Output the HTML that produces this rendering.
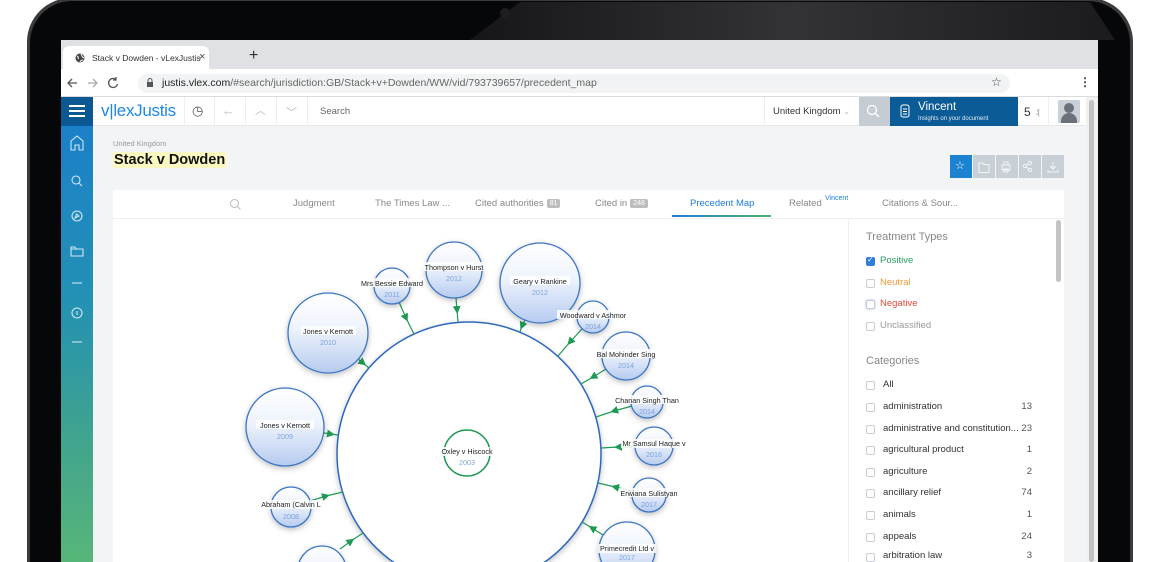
<!DOCTYPE html>
<html><head><meta charset="utf-8"><style>
*{margin:0;padding:0;box-sizing:border-box}
html,body{width:1154px;height:562px;overflow:hidden}
body{background:#fff;font-family:"Liberation Sans",Arial,sans-serif;position:relative}
.a{position:absolute}
.t{position:absolute;white-space:nowrap}
.cb{position:absolute;left:866px;width:9px;height:9px;border:1px solid #c9ccd1;border-radius:2px;background:#fff}
.cat{position:absolute;left:883px;font-size:9.5px;line-height:11px;color:#333}
.cnt{position:absolute;right:122px;font-size:9.5px;line-height:11px;color:#555}
.tab{position:absolute;top:198px;font-size:9.5px;color:#888}
.badge{display:inline-block;background:#bdbdbd;color:#fff;font-size:7px;padding:1px 3px;border-radius:2px;margin-left:3px;vertical-align:1px}
.ab{position:absolute;top:155px;width:22px;height:23px;background:#c9cfd7}
</style></head><body>
<!-- laptop bezel -->
<div class="a" style="left:27px;top:-2px;width:1106px;height:564px;background:#3b3b3d;border-radius:44px 44px 0 0"></div>
<div class="a" style="left:30px;top:1px;width:1100px;height:561px;background:#060709;border-radius:42px 42px 0 0"></div>
<svg class="a" style="left:0;top:0" width="1154" height="40"><defs><linearGradient id="rg" x1="0" x2="1" y1="0" y2="0"><stop offset="0" stop-color="#1a1a1c"/><stop offset="0.5" stop-color="#3e3e40"/><stop offset="1" stop-color="#202022"/></linearGradient></defs><polygon points="520,2 1090,2 1115,40 470,40" fill="url(#rg)" opacity="0.8"/><circle cx="505" cy="13" r="5" fill="#1e1e20"/></svg>
<!-- screen -->
<div class="a" style="left:61px;top:40px;width:1037px;height:522px;background:#f3f4f6"></div>
<!-- tab strip -->
<div class="a" style="left:61px;top:40px;width:1037px;height:29px;background:#dfe1e5"></div>
<div class="a" style="left:63px;top:46px;width:146px;height:23px;background:#fff;border-radius:6px 6px 0 0"></div>
<svg class="a" style="left:75px;top:53px" width="10" height="10"><circle cx="5" cy="5" r="4.5" fill="#444"/><path d="M2 3 Q4 4 3 6 M6 1 Q7 4 9 5 M5 9 Q6 7 8 7" stroke="#fff" stroke-width="1" fill="none"/></svg>
<div class="t" style="left:92px;top:53px;font-size:8.5px;color:#333">Stack v Dowden - vLexJustis</div>
<div class="t" style="left:199px;top:51px;font-size:11px;color:#444">×</div>
<div class="t" style="left:249px;top:47px;font-size:16px;color:#333">+</div>
<!-- address bar -->
<div class="a" style="left:61px;top:69px;width:1037px;height:28px;background:#fff;border-bottom:1px solid #dadce0"></div>
<svg class="a" style="left:66px;top:76px" width="60" height="14" stroke="#555" stroke-width="1.3" fill="none"><path d="M11 7H2M6 3L2 7l4 4"/><path d="M22 7h9M27 3l4 4-4 4" stroke="#aaa"/><path d="M50 3.5A4.5 4.5 0 1 0 51.5 8M50 1v3h-3"/></svg>
<div class="a" style="left:138px;top:74px;width:872px;height:19px;background:#f1f3f4;border-radius:10px"></div>
<svg class="a" style="left:146px;top:78px" width="8" height="10"><rect x="1" y="4" width="6" height="5" fill="#555"/><path d="M2 4V2.5a2 2 0 0 1 4 0V4" stroke="#555" fill="none"/></svg>
<div class="t" style="left:162px;top:77px;font-size:10.5px;color:#222">justis.vlex.com<span style="color:#666">/#search/jurisdiction:GB/Stack+v+Dowden/WW/vid/793739657/precedent_map</span></div>
<div class="t" style="left:991px;top:75px;font-size:12px;color:#444">☆</div>
<div class="t" style="left:1079px;top:75px;font-size:12px;color:#444;font-weight:bold">⋮</div>
<!-- app header -->
<div class="a" style="left:61px;top:97px;width:1025px;height:29px;background:#fff;border-bottom:1px solid #e5e7ea"></div>
<div class="a" style="left:61px;top:97px;width:32px;height:29px;background:#0b5893"></div>
<div class="a" style="left:69px;top:105px;width:16px;height:2px;background:#fff;box-shadow:0 5px 0 #fff,0 10px 0 #fff"></div>
<div class="t" style="left:101px;top:101px;font-size:17px;color:#1e88e5;letter-spacing:-0.3px">v|lexJustis</div>
<div class="a" style="left:184px;top:97px;width:1px;height:29px;background:#eee"></div>
<div class="t" style="left:192px;top:103px;font-size:13px;color:#555">◷</div>
<div class="a" style="left:214px;top:97px;width:1px;height:29px;background:#eee"></div>
<div class="t" style="left:222px;top:103px;font-size:13px;color:#bbb">←</div>
<div class="a" style="left:245px;top:97px;width:1px;height:29px;background:#eee"></div>
<div class="t" style="left:255px;top:102px;font-size:11px;color:#bbb">︿</div>
<div class="a" style="left:276px;top:97px;width:1px;height:29px;background:#eee"></div>
<div class="t" style="left:286px;top:104px;font-size:11px;color:#bbb">﹀</div>
<div class="a" style="left:307px;top:97px;width:1px;height:29px;background:#eee"></div>
<div class="t" style="left:320px;top:106px;font-size:9.5px;color:#666">Search</div>
<div class="a" style="left:764px;top:97px;width:1px;height:29px;background:#eee"></div>
<div class="t" style="left:773px;top:106px;font-size:9.5px;color:#333">United Kingdom <span style="color:#bbb;font-size:8px">⌄</span></div>
<div class="a" style="left:859px;top:97px;width:31px;height:29px;background:#c6ccd4"></div>
<svg class="a" style="left:866px;top:104px" width="14" height="14"><circle cx="6" cy="6" r="4.5" stroke="#fff" stroke-width="1.3" fill="none"/><path d="M9.5 9.5L13 13" stroke="#fff" stroke-width="1.3"/></svg>
<div class="a" style="left:890px;top:97px;width:128px;height:29px;background:#0b5b96"></div>
<svg class="a" style="left:900px;top:104px" width="10" height="14"><rect x="1" y="1" width="8" height="12" rx="2" stroke="#fff" fill="none"/><path d="M3 5h4M3 7.5h4M3 10h4" stroke="#fff"/></svg>
<div class="t" style="left:918px;top:101px;font-size:11.5px;color:#fff">Vincent</div>
<div class="t" style="left:918px;top:116px;font-size:6px;color:#e0ecf7">Insights on your document</div>
<div class="t" style="left:1024px;top:105px;font-size:12px;color:#333">5 <span style="font-size:9px;color:#999">⺦</span></div>
<div class="a" style="left:1048px;top:97px;width:1px;height:29px;background:#eee"></div>
<div class="a" style="left:1058px;top:100px;width:22px;height:23px;background:#c9d0d8;border-radius:2px;overflow:hidden"><div class="a" style="left:6px;top:3px;width:10px;height:10px;border-radius:50%;background:#6b7079"></div><div class="a" style="left:3px;top:13px;width:16px;height:10px;border-radius:8px 8px 0 0;background:#6b7079"></div></div>
<!-- sidebar -->
<div class="a" style="left:61px;top:126px;width:32px;height:436px;background:linear-gradient(#1b80c9 0%,#2391b3 40%,#3fa38f 70%,#58b57a 100%)"></div>
<svg class="a" style="left:61px;top:126px" width="32" height="230" stroke="#cfe6f5" fill="none" stroke-width="1.1">
<path d="M10 24V15l6-5 6 5v9h-4v-5h-4v5z"/>
<circle cx="15" cy="54" r="4"/><path d="M18 57l3 3"/>
<circle cx="16" cy="90" r="5"/><path d="M14 92l1.5-4 2.5 2z"/>
<path d="M10 123h12v7H10zM10 123v-2h4l1 2"/>
<path d="M11 157h10"/>
<circle cx="16" cy="187" r="5"/><path d="M16 185v4"/>
<path d="M11 216h10"/>
</svg>
<!-- scrollbar -->
<div class="a" style="left:1086px;top:97px;width:12px;height:465px;background:#f0f0f0"></div>
<div class="a" style="left:1089px;top:100px;width:5px;height:462px;background:#c1c1c1;border-radius:3px"></div>
<!-- title -->
<div class="t" style="left:113px;top:139px;font-size:7.5px;color:#999">United Kingdom</div>
<div class="t" style="left:113px;top:152px;font-size:14.5px;font-weight:bold;color:#111;background:#fbf7c0;padding:0 1px">Stack v Dowden</div>
<div class="ab" style="left:950px;background:#1b83cf"></div>
<div class="t" style="left:955px;top:159px;font-size:11px;color:#fff">☆</div>
<div class="ab" style="left:973px"></div><div class="ab" style="left:996px"></div><div class="ab" style="left:1019px"></div><div class="ab" style="left:1042px"></div>
<svg class="a" style="left:973px;top:155px" width="92" height="23" stroke="#f4f6f8" fill="none" stroke-width="1"><path d="M6 8h4l1 1.5h5v8H6z"/><path d="M29 10h8v5h-8zM31 10V7h4v3M31 14h4v3h-4z"/><circle cx="52" cy="11" r="1.6"/><circle cx="57" cy="8" r="1.6"/><circle cx="57" cy="15" r="1.6"/><path d="M53.5 10.3l2-1.2M53.5 11.8l2 2"/><path d="M80 7v7M77 11l3 3 3-3M75 15v2h10v-2"/></svg>
<!-- card -->
<div class="a" style="left:113px;top:190px;width:951px;height:372px;background:#fff"></div>
<div class="a" style="left:113px;top:218px;width:951px;height:1px;background:#eceef0"></div>
<svg class="a" style="left:229px;top:198px" width="13" height="13"><circle cx="5.5" cy="5.5" r="4" stroke="#bbb" fill="none"/><path d="M8.5 8.5l3 3" stroke="#bbb"/></svg>
<div class="tab" style="left:293px">Judgment</div>
<div class="tab" style="left:375px">The Times Law ...</div>
<div class="tab" style="left:475px">Cited authorities<span class="badge">81</span></div>
<div class="tab" style="left:595px">Cited in<span class="badge">248</span></div>
<div class="tab" style="left:690px;color:#1e7fd6">Precedent Map</div>
<div class="a" style="left:672px;top:215px;width:99px;height:2px;background:linear-gradient(90deg,#1e7fd6,#4db06b)"></div>
<div class="tab" style="left:789px">Related</div>
<div class="t" style="left:825px;top:195px;font-size:7px;color:#1e7fd6">Vincent</div>
<div class="tab" style="left:882px">Citations &amp; Sour...</div>
<!-- right panel -->
<div class="a" style="left:848px;top:219px;width:1px;height:343px;background:#eceef0"></div>
<div class="a" style="left:1056px;top:220px;width:5px;height:62px;background:#c4c4c4;border-radius:3px"></div>
<div class="t" style="left:866px;top:231px;font-size:11px;color:#888">Treatment Types</div>
<div class="cb" style="top:257px;background:#2f7de1;border-color:#2f7de1"></div><div class="t" style="left:867px;top:255px;font-size:8px;color:#fff">✓</div>
<div class="t" style="left:880px;top:255px;font-size:9.5px;color:#27a160">Positive</div>
<div class="cb" style="top:279px"></div><div class="t" style="left:880px;top:277px;font-size:9.5px;color:#f39a3e">Neutral</div>
<div class="cb" style="top:300px;box-shadow:0 0 2px #8ab4f0"></div><div class="t" style="left:880px;top:298px;font-size:9.5px;color:#e8493d">Negative</div>
<div class="cb" style="top:322px"></div><div class="t" style="left:880px;top:320px;font-size:9.5px;color:#999">Unclassified</div>
<div class="t" style="left:866px;top:355px;font-size:11px;color:#888">Categories</div>
<div class="cb" style="top:381px"></div><div class="cat" style="top:379px">All</div>
<div class="cb" style="top:403px"></div><div class="cat" style="top:401px">administration</div><div class="cnt" style="top:401px">13</div>
<div class="cb" style="top:425px"></div><div class="cat" style="top:423px">administrative and constitution...</div><div class="cnt" style="top:423px">23</div>
<div class="cb" style="top:446px"></div><div class="cat" style="top:444px">agricultural product</div><div class="cnt" style="top:444px">1</div>
<div class="cb" style="top:468px"></div><div class="cat" style="top:466px">agriculture</div><div class="cnt" style="top:466px">2</div>
<div class="cb" style="top:489px"></div><div class="cat" style="top:487px">ancillary relief</div><div class="cnt" style="top:487px">74</div>
<div class="cb" style="top:511px"></div><div class="cat" style="top:509px">animals</div><div class="cnt" style="top:509px">1</div>
<div class="cb" style="top:533px"></div><div class="cat" style="top:531px">appeals</div><div class="cnt" style="top:531px">24</div>
<div class="cb" style="top:553px"></div><div class="cat" style="top:550px">arbitration law</div><div class="cnt" style="top:550px">3</div>
<!-- graph -->
<svg class="a" style="left:0;top:0;overflow:hidden" width="848" height="562" font-family="Liberation Sans, Arial, sans-serif">
<defs>
<linearGradient id="bg" x1="0" y1="0" x2="0" y2="1"><stop offset="0" stop-color="#ffffff"/><stop offset="0.45" stop-color="#eef3fc"/><stop offset="1" stop-color="#b6cbf0"/></linearGradient>
<marker id="ar" markerWidth="8" markerHeight="8" refX="4" refY="4" orient="auto" markerUnits="userSpaceOnUse"><path d="M0 0L8 4L0 8z" fill="#1f9a55"/></marker>
<filter id="sh"><feDropShadow dx="0" dy="2" stdDeviation="3" flood-opacity="0.25"/></filter>
</defs>
<rect x="113" y="219" width="735" height="343" fill="#fff"/>
<circle cx="469" cy="454" r="132" fill="#fff" stroke="#2d68bd" stroke-width="1.5" filter="url(#sh)"/>
<g stroke="#1f9a55" stroke-width="1.2" fill="none" marker-mid="url(#ar)">
<path d="M399 302L406 318L414 334"/><path d="M456 298L457 310L458 322"/><path d="M525 320L522 326L520 332"/>
<path d="M582 329L570 342L558 356"/><path d="M358 359L363 363L369 368"/><path d="M606 369L593 377L581 384"/>
<path d="M632 406L614 411L596 417"/><path d="M324 433L331 434L338 435"/><path d="M635 447L618 447L601 448"/>
<path d="M632 491L615 487L598 483"/><path d="M310 501L326 496L343 492"/><path d="M603 535L592 528L582 522"/>
<path d="M340 549L351 541L363 533"/>
</g>
<g stroke="#3a74c4" stroke-width="1.3" fill="url(#bg)" filter="url(#sh)">
<circle cx="392" cy="286" r="18"/><circle cx="454" cy="270" r="28"/><circle cx="540" cy="283" r="40"/>
<circle cx="593" cy="317" r="16"/><circle cx="328" cy="333" r="40"/><circle cx="626" cy="356" r="24"/>
<circle cx="647" cy="402" r="16"/><circle cx="285" cy="427" r="39"/><circle cx="654" cy="446" r="19"/>
<circle cx="649" cy="495" r="17"/><circle cx="291" cy="507" r="20"/><circle cx="627" cy="550" r="28"/>
<circle cx="322" cy="570" r="24"/>
</g>
<circle cx="467" cy="453" r="23" fill="#fff" stroke="#1f9a55" stroke-width="1.5"/>
<g font-size="7.2" text-anchor="middle">
<g fill="#fff" opacity="0.85"><rect x="361" y="278" width="63" height="9"/><rect x="423" y="262" width="62" height="9"/><rect x="510" y="276" width="60" height="9"/><rect x="557" y="310" width="72" height="9"/><rect x="301" y="326" width="55" height="9"/><rect x="596" y="349" width="60" height="9"/><rect x="614" y="395" width="66" height="9"/><rect x="256" y="420" width="58" height="9"/><rect x="621" y="439" width="66" height="9"/><rect x="619" y="488" width="60" height="9"/><rect x="260" y="500" width="62" height="9"/><rect x="598" y="544" width="58" height="9"/><rect x="441" y="447" width="54" height="9"/></g>
<g fill="#222"><text x="392" y="286">Mrs Bessie Edward</text><text x="454" y="270">Thompson v Hurst</text><text x="540" y="284">Geary v Rankine</text><text x="593" y="318">Woodward v Ashmor</text><text x="328" y="334">Jones v Kernott</text><text x="626" y="357">Bal Mohinder Sing</text><text x="647" y="403">Chanan Singh Than</text><text x="285" y="428">Jones v Kernott</text><text x="654" y="446">Mr Samsul Haque v</text><text x="649" y="496">Erwiana Sulistyan</text><text x="291" y="507">Abraham (Calvin L</text><text x="627" y="551">Primecredit Ltd v</text><text x="467" y="454">Oxley v Hiscock</text></g>
<g fill="#7ea3de"><text x="392" y="297">2011</text><text x="454" y="281">2012</text><text x="540" y="295">2012</text><text x="593" y="329">2014</text><text x="328" y="345">2010</text><text x="626" y="368">2014</text><text x="647" y="414">2014</text><text x="285" y="439">2009</text><text x="654" y="457">2016</text><text x="649" y="507">2017</text><text x="291" y="519">2008</text><text x="627" y="560">2017</text><text x="467" y="465">2003</text></g>
</g>
</svg>
</body></html>
